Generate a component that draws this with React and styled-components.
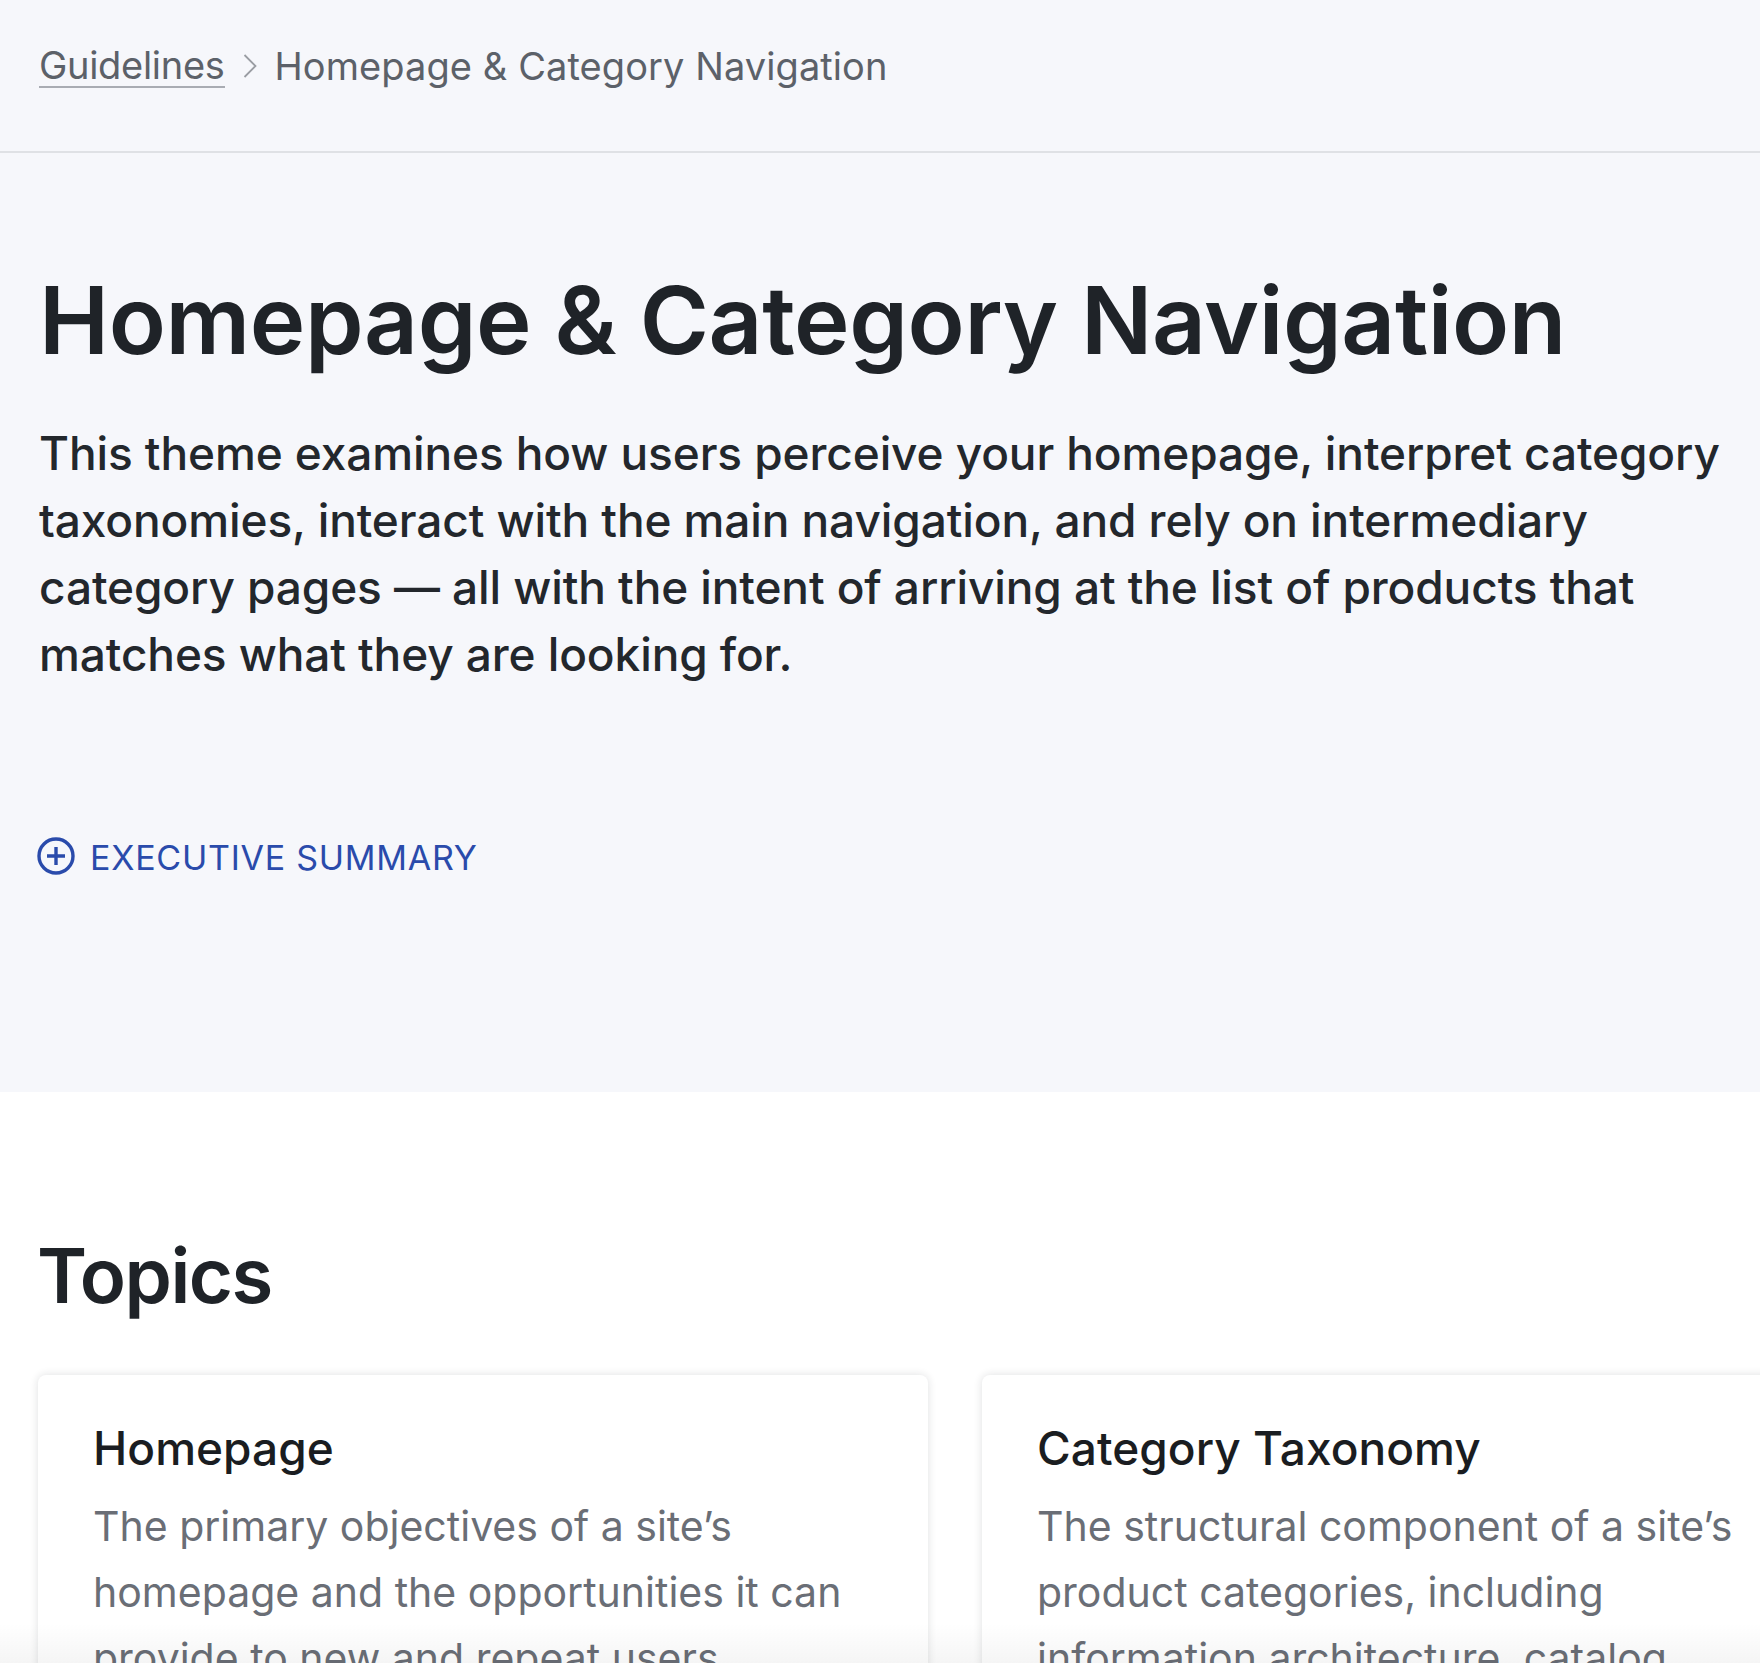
import React from "react";
import styled, { createGlobalStyle } from "styled-components";

const GlobalStyle = createGlobalStyle`
  html, body {
    margin: 0;
    height: 1663px;
    overflow: hidden;
    background: #ffffff;
    font-family: Inter, "Liberation Sans", sans-serif;
  }
`;

const Page = styled.div`
  position: relative;
  width: 1760px;
  height: 1663px;
  overflow: hidden;
`;

const Hero = styled.header`
  height: 1092px;
  box-sizing: border-box;
  background: #f6f7fb;
`;

const Breadcrumbs = styled.nav`
  display: flex;
  align-items: center;
  gap: 18px;
  height: 153px;
  box-sizing: border-box;
  padding: 0 39px 20px;
  border-bottom: 2px solid #dfe1e5;
  font-size: 38px;
  letter-spacing: 0.08px;
  color: #5c6169;
`;

const Crumb = styled.a`
  margin-top: 2px;
  border-bottom: 2px solid #a9acb3;
  line-height: 41px;
  letter-spacing: -0.3px;
`;

const Intro = styled.div`
  padding: 111px 30px 0 39px;
`;

const Title = styled.h1`
  margin: 0;
  font-size: 94px;
  line-height: 112px;
  font-weight: 600;
  letter-spacing: -0.4px;
  color: #1f2328;
`;

const Lead = styled.p`
  margin: 44px 0 0;
  font-size: 46px;
  line-height: 67px;
  font-weight: 500;
  letter-spacing: -0.1px;
  color: #23272c;
`;

const Summary = styled.button`
  display: flex;
  align-items: center;
  gap: 15px;
  margin: 149px 0 0 -2px;
  padding: 0;
  border: 0;
  background: none;
  font: inherit;
  font-size: 34px;
  letter-spacing: 0.75px;
  color: #2a4bab;
  text-transform: uppercase;
`;

const SummaryIcon = styled.svg`
  margin-top: -4px;
`;

const Topics = styled.section`
  padding: 138px 38px 0;
`;

const TopicsTitle = styled.h2`
  margin: 0 0 0 -1px;
  font-size: 76px;
  line-height: 90px;
  font-weight: 600;
  letter-spacing: -1.5px;
  color: #1f2328;
`;

const CardGrid = styled.div`
  display: grid;
  grid-template-columns: 890px 890px;
  gap: 54px;
  margin-top: 55px;
`;

const Card = styled.article`
  box-sizing: border-box;
  height: 420px;
  padding: 45px 55px;
  border-radius: 8px;
  background: #ffffff;
  box-shadow: 0 0 8px rgba(30, 35, 45, 0.14);
`;

const CardTitle = styled.h3`
  margin: 0;
  font-size: 46px;
  line-height: 56px;
  font-weight: 500;
  letter-spacing: 0.05px;
  color: #1a1d21;
`;

const CardText = styled.p`
  margin: 17px 0 0;
  font-size: 41px;
  line-height: 66px;
  color: #6a6e76;
`;

const BottomShade = styled.div`
  position: absolute;
  left: 0;
  right: 0;
  bottom: 0;
  height: 40px;
  background: linear-gradient(rgba(0, 0, 0, 0), rgba(0, 0, 0, 0.04));
`;

const topics = [
  {
    title: "Homepage",
    text: "The primary objectives of a site’s homepage and the opportunities it can provide to new and repeat users",
  },
  {
    title: "Category Taxonomy",
    text: "The structural component of a site’s product categories, including information architecture, catalog",
  },
];

export default function App() {
  return (
    <Page>
      <GlobalStyle />
      <Hero>
        <Breadcrumbs>
          <Crumb>Guidelines</Crumb>
          <svg width="14" height="24" viewBox="0 0 14 24" fill="none" stroke="#9a9da3" strokeWidth="1.8">
            <path d="M1.5 1l11 11-11 11" />
          </svg>
          <span>Homepage &amp; Category Navigation</span>
        </Breadcrumbs>
        <Intro>
          <Title>Homepage &amp; Category Navigation</Title>
          <Lead>
            This theme examines how users perceive your homepage, interpret category taxonomies, interact with the main
            navigation, and rely on intermediary category pages — all with the intent of arriving at the list of products
            that matches what they are looking for.
          </Lead>
          <Summary>
            <SummaryIcon width="38" height="38" viewBox="0 0 38 38" fill="none" stroke="#2a4bab" strokeWidth="3.4">
              <circle cx="19" cy="19" r="17" />
              <path d="M19 10v18M10 19h18" />
            </SummaryIcon>
            Executive Summary
          </Summary>
        </Intro>
      </Hero>
      <Topics>
        <TopicsTitle>Topics</TopicsTitle>
        <CardGrid>
          {topics.map(t => (
            <Card key={t.title}>
              <CardTitle>{t.title}</CardTitle>
              <CardText>{t.text}</CardText>
            </Card>
          ))}
        </CardGrid>
      </Topics>
      <BottomShade />
    </Page>
  );
}
